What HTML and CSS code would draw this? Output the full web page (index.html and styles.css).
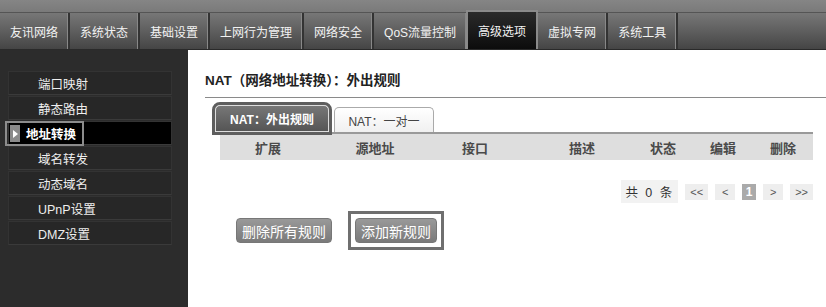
FILE: index.html
```html
<!DOCTYPE html>
<html lang="zh-CN">
<head>
    <meta charset="UTF-8">
    <title>高级选项 - 地址转换</title>
    <link rel="stylesheet" href="styles.css">
</head>
<body>
    <div class="topline"></div>

    <!-- main menu -->
    <div class="nav">
        <a class="nav-item">友讯网络</a>
        <a class="nav-item">系统状态</a>
        <a class="nav-item">基础设置</a>
        <a class="nav-item">上网行为管理</a>
        <a class="nav-item">网络安全</a>
        <a class="nav-item">QoS流量控制</a>
        <a class="nav-item active">高级选项</a>
        <a class="nav-item">虚拟专网</a>
        <a class="nav-item">系统工具</a>
    </div>

    <div class="main">
        <div class="sidebar">
            <ul class="menu">
                <li>端口映射</li>
                <li>静态路由</li>
                <li class="current"><span class="mark"><i class="arrow"></i>地址转换</span></li>
                <li>域名转发</li>
                <li>动态域名</li>
                <li>UPnP设置</li>
                <li>DMZ设置</li>
            </ul>
        </div>

        <div class="content">
            <h2 class="title">NAT（网络地址转换）：外出规则</h2>

            <div class="panel">
                <div class="tabs">
                    <div class="tab active">NAT：外出规则</div>
                    <div class="tab">NAT：一对一</div>
                </div>

                <div class="table-head">
                    <span class="c1">扩展</span>
                    <span class="c2">源地址</span>
                    <span class="c3">接口</span>
                    <span class="c4">描述</span>
                    <span class="c5">状态</span>
                    <span class="c6">编辑</span>
                    <span class="c7">删除</span>
                </div>

                <div class="pager">
                    <span class="total">共 0 条</span>
                    <span class="pg">&lt;&lt;</span>
                    <span class="pg">&lt;</span>
                    <span class="pg cur">1</span>
                    <span class="pg">&gt;</span>
                    <span class="pg">&gt;&gt;</span>
                </div>

                <div class="actions">
                    <button class="btn">删除所有规则</button>
                    <span class="btn-mark"><button class="btn">添加新规则</button></span>
                </div>
            </div>
        </div>
    </div>
</body>
</html>
```
FILE: styles.css
```css
body {
    margin: 0;
    width: 826px;
    height: 307px;
    overflow: hidden;
    background: #fff;
    font-family: "Liberation Sans", "Noto Sans CJK SC", sans-serif;
    font-size: 12px;
    color: #333;
}

/* top menu */
.topline {
    height: 12px;
    background: linear-gradient(#858585, #7a7a7a);
}

.nav {
    display: flex;
    height: 36px;
    background: linear-gradient(#777, #5c5c5c 55%, #454545);
    border-top: 1px solid #555;
    border-bottom: 1px solid #2a2a2a;
}

.nav-item {
    display: flex;
    align-items: center;
    padding: 0 10px;
    color: #f2f2f2;
    font-size: 12px;
    border-right: 2px solid #333;
    box-shadow: inset -1px 0 0 #888;
}

.nav-item.active {
    margin-top: -3px;
    margin-left: -2px;
    padding: 0 10px;
    background: linear-gradient(#2a2a2a, #0c0c0c);
    border: 2px solid #8a8a8a;
    border-bottom: none;
    box-shadow: none;
}

.main {
    display: flex;
    height: 258px;
}

/* left menu */
.sidebar {
    width: 188px;
    background: #2c2c2c;
    padding-top: 21px;
}

.menu {
    list-style: none;
    margin: 0;
    padding: 0;
}

.menu li {
    display: flex;
    align-items: center;
    height: 22px;
    margin: 0 16px 1px 8px;
    padding-left: 29px;
    background: #272727;
    border: 1px solid #333;
    border-bottom-color: #3a3a3a;
    color: #eee;
    font-size: 12.5px;
}

.menu li.current {
    padding-left: 0;
    background: #000;
    font-weight: bold;
    color: #fff;
}

.menu .mark {
    display: flex;
    align-items: center;
    height: 21px;
    margin-left: -4px;
    padding-right: 6px;
    border: 2px solid #8c8c8c;
}

.menu .arrow {
    width: 10px;
    height: 17px;
    margin: 0 6px 0 3px;
    background: #8a8a8a;
    position: relative;
}

.menu .arrow::after {
    content: "";
    position: absolute;
    left: 3px;
    top: 5px;
    border-left: 5px solid #fff;
    border-top: 4px solid transparent;
    border-bottom: 4px solid transparent;
}

/* content */
.content {
    flex: 1;
    padding: 19px 0 0 17px;
}

.title {
    margin: 0;
    padding-bottom: 8px;
    font-size: 13.5px;
    color: #222;
    border-bottom: 1px solid #8a8a8a;
}

.panel {
    margin: 2px 13px 0 15px;
}

.tabs {
    display: flex;
    align-items: flex-end;
    height: 32px;
    margin-left: -5px;
}

.tab {
    display: flex;
    align-items: center;
    justify-content: center;
    width: 98px;
    height: 24px;
    margin-right: 3px;
    border: 1px solid #aaa;
    border-bottom: none;
    border-radius: 5px 5px 0 0;
    background: linear-gradient(#fff, #f0f0f0);
    color: #444;
}

.tab.active {
    width: 112px;
    height: 25px;
    background: linear-gradient(#777, #555);
    border: 1px solid #ddd;
    color: #fff;
    font-weight: bold;
    outline: 3px solid #5e5e5e;
    margin-right: 5px;
}

.table-head {
    display: flex;
    align-items: center;
    height: 26px;
    background: #dedede;
    border-top: 2px solid #999;
    font-weight: bold;
    font-size: 13px;
    color: #4a4a4a;
}

.table-head span {
    text-align: center;
}

.c1 { width: 96px; }
.c2 { width: 118px; }
.c3 { width: 82px; }
.c4 { width: 132px; }
.c5 { width: 30px; }
.c6 { width: 90px; }
.c7 { width: 30px; }

.pager {
    display: flex;
    justify-content: flex-end;
    align-items: center;
    gap: 7px;
    margin-top: 20px;
    font-size: 11px;
    color: #555;
}

.pager .total {
    font-size: 12.5px;
    letter-spacing: 2px;
    padding: 2px 4px;
    background: #f2f2f2;
    color: #333;
}

.pager .pg {
    min-width: 10px;
    padding: 2px 5px;
    background: #eee;
    text-align: center;
}

.pager .pg.cur {
    background: #aaa;
    color: #fff;
    font-weight: bold;
    font-size: 12px;
    padding: 1px 2px;
}

.actions {
    display: flex;
    align-items: center;
    gap: 16px;
    margin-top: 8px;
    padding-left: 16px;
}

.btn {
    height: 25px;
    padding: 0 5px;
    font-family: inherit;
    font-size: 14px;
    color: #fff;
    background: linear-gradient(#999, #7a7a7a);
    border: 1px solid #777;
    border-radius: 4px;
}

.btn-mark {
    padding: 4px 4px;
    border: 3px solid #6f6f6f;
}
```
